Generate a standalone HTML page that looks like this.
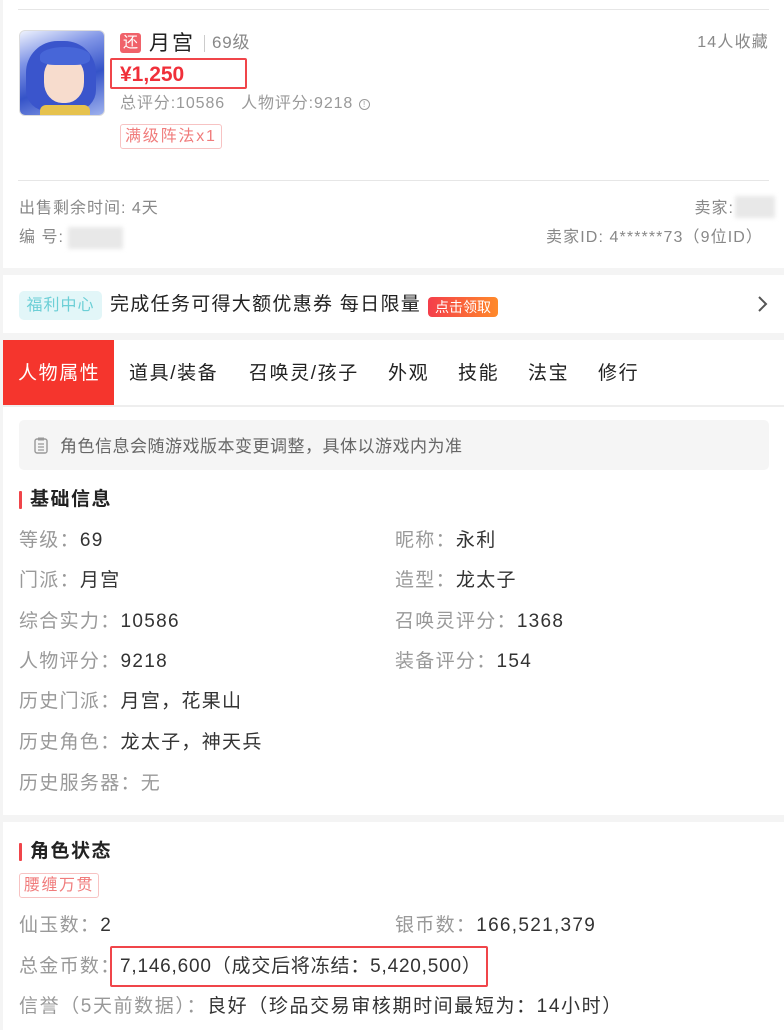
<!DOCTYPE html>
<html><head><meta charset="utf-8"><style>
*{margin:0;padding:0;box-sizing:border-box}
body{width:784px;height:1030px;background:#f4f4f4;font-family:"Liberation Sans","Noto Sans CJK SC",sans-serif;position:relative;overflow:hidden;color:#333}
.card{position:absolute;left:3px;right:0;background:#fff}
.a{position:absolute;white-space:nowrap;line-height:1}
.g{color:#999}
.hl{position:absolute;height:1px;background:#e6e6e6;left:15px;right:15px}
.row{font-size:19px;letter-spacing:1.3px}
.row .g{color:#999}
.bar{position:absolute;width:3px;height:18px;background:#f0454a;border-radius:1px}
.tab{position:absolute;top:24px;font-size:19px;letter-spacing:1.6px;color:#222;white-space:nowrap;line-height:1}
</style></head><body>
<div class="card" style="top:0;height:268px">
  <div class="hl" style="top:9px"></div>
  <div style="position:absolute;left:16px;top:30px;width:86px;height:86px;border-radius:6px;border:1px solid #ddd;overflow:hidden;background:linear-gradient(160deg,#eef2fd 0%,#7f94e6 30%,#3553c8 60%,#9fb2ee 100%)">
    <div style="position:absolute;left:6px;top:10px;width:70px;height:70px;border-radius:45% 45% 30% 30%;background:#3a55cc"></div>
    <div style="position:absolute;left:24px;top:26px;width:40px;height:46px;border-radius:40% 40% 45% 45%;background:#f7dccd"></div>
    <div style="position:absolute;left:20px;top:16px;width:50px;height:18px;border-radius:50% 50% 30% 30%;background:#4766d8"></div>
    <div style="position:absolute;left:20px;top:74px;width:50px;height:12px;background:#e6c24e;border-radius:6px 6px 0 0"></div>
  </div>
  <div class="a" style="left:117px;top:33px;width:21px;height:20px;background:#f0626a;border-radius:3px;color:#fff;font-size:15px;line-height:20px;text-align:center">还</div>
  <div class="a" style="left:146px;top:33px;font-size:21px;letter-spacing:2px;color:#222">月宫</div>
  <div style="position:absolute;left:201px;top:35px;width:1px;height:17px;background:#ccc"></div>
  <div class="a g" style="left:209px;top:34px;font-size:17px;letter-spacing:0.8px;color:#888">69级</div>
  <div class="a" style="right:15px;top:35px;font-size:16px;letter-spacing:1.2px;color:#888">14人收藏</div>
  <div style="position:absolute;left:107px;top:58px;width:137px;height:31px;border:2.5px solid #f0454a;border-radius:2px"></div>
  <div class="a" style="left:117px;top:64px;font-size:21px;font-weight:bold;color:#f0303a">¥1,250</div>
  <div class="a" style="left:117px;top:96px;font-size:16px;letter-spacing:0.9px;color:#999">总评分:10586&nbsp;&nbsp; 人物评分:9218 <span style="display:inline-block;width:11px;height:11px;border:1px solid #999;border-radius:50%;font-size:8px;text-align:center;line-height:10px;vertical-align:1px;letter-spacing:0">!</span></div>
  <div class="a" style="left:117px;top:124px;height:25px;padding:0 4px;border:1px solid #f7c3c3;border-radius:3px;font-size:16px;letter-spacing:1.8px;line-height:23px;color:#f07c7c">满级阵法x1</div>
  <div class="hl" style="top:180px"></div>
  <div class="a" style="left:16px;top:201px;font-size:16px;letter-spacing:1px;color:#888">出售剩余时间: 4天</div>
  <div class="a" style="left:16px;top:230px;font-size:16px;letter-spacing:1px;color:#888">编 号:</div>
  <div style="position:absolute;left:65px;top:227px;width:55px;height:22px;background:#e8e8e8;filter:blur(2px)"></div>
  <div class="a" style="right:50px;top:201px;font-size:16px;letter-spacing:1px;color:#888">卖家:</div>
  <div style="position:absolute;left:732px;top:196px;width:40px;height:22px;background:#e8e8e8;filter:blur(2px)"></div>
  <div class="a" style="right:21px;top:230px;font-size:16px;letter-spacing:1.1px;color:#888">卖家ID: 4******73（9位ID）</div>
</div>
<div class="card" style="top:275px;height:58px">
  <div class="a" style="left:16px;top:16px;width:83px;height:29px;background:#e2f6f8;border-radius:5px;color:#6ccfd6;font-size:16px;letter-spacing:1px;line-height:29px;text-align:center">福利中心</div>
  <div class="a" style="left:107px;top:20px;font-size:19px;letter-spacing:1.3px;color:#222">完成任务可得大额优惠券 每日限量</div>
  <div class="a" style="left:425px;top:22px;width:70px;height:20px;border-radius:4px;background:linear-gradient(90deg,#f43e4b,#ff8a2a);color:#fff;font-size:14px;line-height:20px;text-align:center">点击领取</div>
  <svg style="position:absolute;left:753px;top:20px" width="12" height="18" viewBox="0 0 12 18"><path d="M3 2l7 7-7 7" fill="none" stroke="#555" stroke-width="2"/></svg>
</div>
<div class="card" style="top:340px;height:475px">
  <div style="position:absolute;left:0;top:0;width:111px;height:65px;background:#f5352d"></div>
  <div class="tab" style="left:15px;color:#fff">人物属性</div>
  <div class="tab" style="left:126px">道具/装备</div>
  <div class="tab" style="left:246px">召唤灵/孩子</div>
  <div class="tab" style="left:385px">外观</div>
  <div class="tab" style="left:455px">技能</div>
  <div class="tab" style="left:525px">法宝</div>
  <div class="tab" style="left:595px">修行</div>
  <div style="position:absolute;left:0;right:0;top:65px;height:2px;background:#eee"></div>
  <div style="position:absolute;left:16px;right:15px;top:80px;height:50px;background:#f5f5f5;border-radius:5px"></div>
  <svg style="position:absolute;left:31px;top:97px" width="14" height="17" viewBox="0 0 14 17"><rect x="1" y="2" width="12" height="14" rx="2" fill="none" stroke="#999" stroke-width="1.4"/><rect x="4" y="0.5" width="6" height="3" fill="#999"/><path d="M4 7h6M4 10h6M4 13h6" stroke="#999" stroke-width="1.2"/></svg>
  <div class="a" style="left:57px;top:98px;font-size:17px;letter-spacing:0.5px;color:#666">角色信息会随游戏版本变更调整，具体以游戏内为准</div>
  <div class="bar" style="left:16px;top:151px"></div>
  <div class="a" style="left:27px;top:150px;font-size:19px;letter-spacing:1.5px;font-weight:bold;color:#222">基础信息</div>
  <div class="a row" style="left:16px;top:191px"><span class="g">等级：</span>69</div>
  <div class="a row" style="left:392px;top:191px"><span class="g">昵称：</span>永利</div>
  <div class="a row" style="left:16px;top:231px"><span class="g">门派：</span>月宫</div>
  <div class="a row" style="left:392px;top:231px"><span class="g">造型：</span>龙太子</div>
  <div class="a row" style="left:16px;top:272px"><span class="g">综合实力：</span>10586</div>
  <div class="a row" style="left:392px;top:272px"><span class="g">召唤灵评分：</span>1368</div>
  <div class="a row" style="left:16px;top:312px"><span class="g">人物评分：</span>9218</div>
  <div class="a row" style="left:392px;top:312px"><span class="g">装备评分：</span>154</div>
  <div class="a row" style="left:16px;top:352px"><span class="g">历史门派：</span>月宫，花果山</div>
  <div class="a row" style="left:16px;top:393px"><span class="g">历史角色：</span>龙太子，神天兵</div>
  <div class="a row" style="left:16px;top:434px"><span class="g">历史服务器：无</span></div>
</div>
<div class="card" style="top:822px;height:208px">
  <div class="bar" style="left:16px;top:21px"></div>
  <div class="a" style="left:27px;top:20px;font-size:19px;letter-spacing:1.5px;font-weight:bold;color:#222">角色状态</div>
  <div class="a" style="left:16px;top:51px;height:25px;padding:0 4px;border:1px solid #f7c3c3;border-radius:3px;font-size:16px;letter-spacing:1.5px;line-height:23px;color:#f07c7c">腰缠万贯</div>
  <div class="a row" style="left:16px;top:94px"><span class="g">仙玉数：</span>2</div>
  <div class="a row" style="left:392px;top:94px"><span class="g">银币数：</span>166,521,379</div>
  <div class="a row" style="left:16px;top:135px"><span class="g">总金币数：</span></div>
  <div style="position:absolute;left:107px;top:124px;width:378px;height:41px;border:2.5px solid #f0454a;border-radius:2px"></div>
  <div class="a row" style="left:117px;top:135px;letter-spacing:0.8px">7,146,600（成交后将冻结：5,420,500）</div>
  <div class="a row" style="left:16px;top:175px;letter-spacing:1.6px"><span class="g">信誉（5天前数据）：</span>良好（珍品交易审核期时间最短为：14小时）</div>
</div>
</body></html>
